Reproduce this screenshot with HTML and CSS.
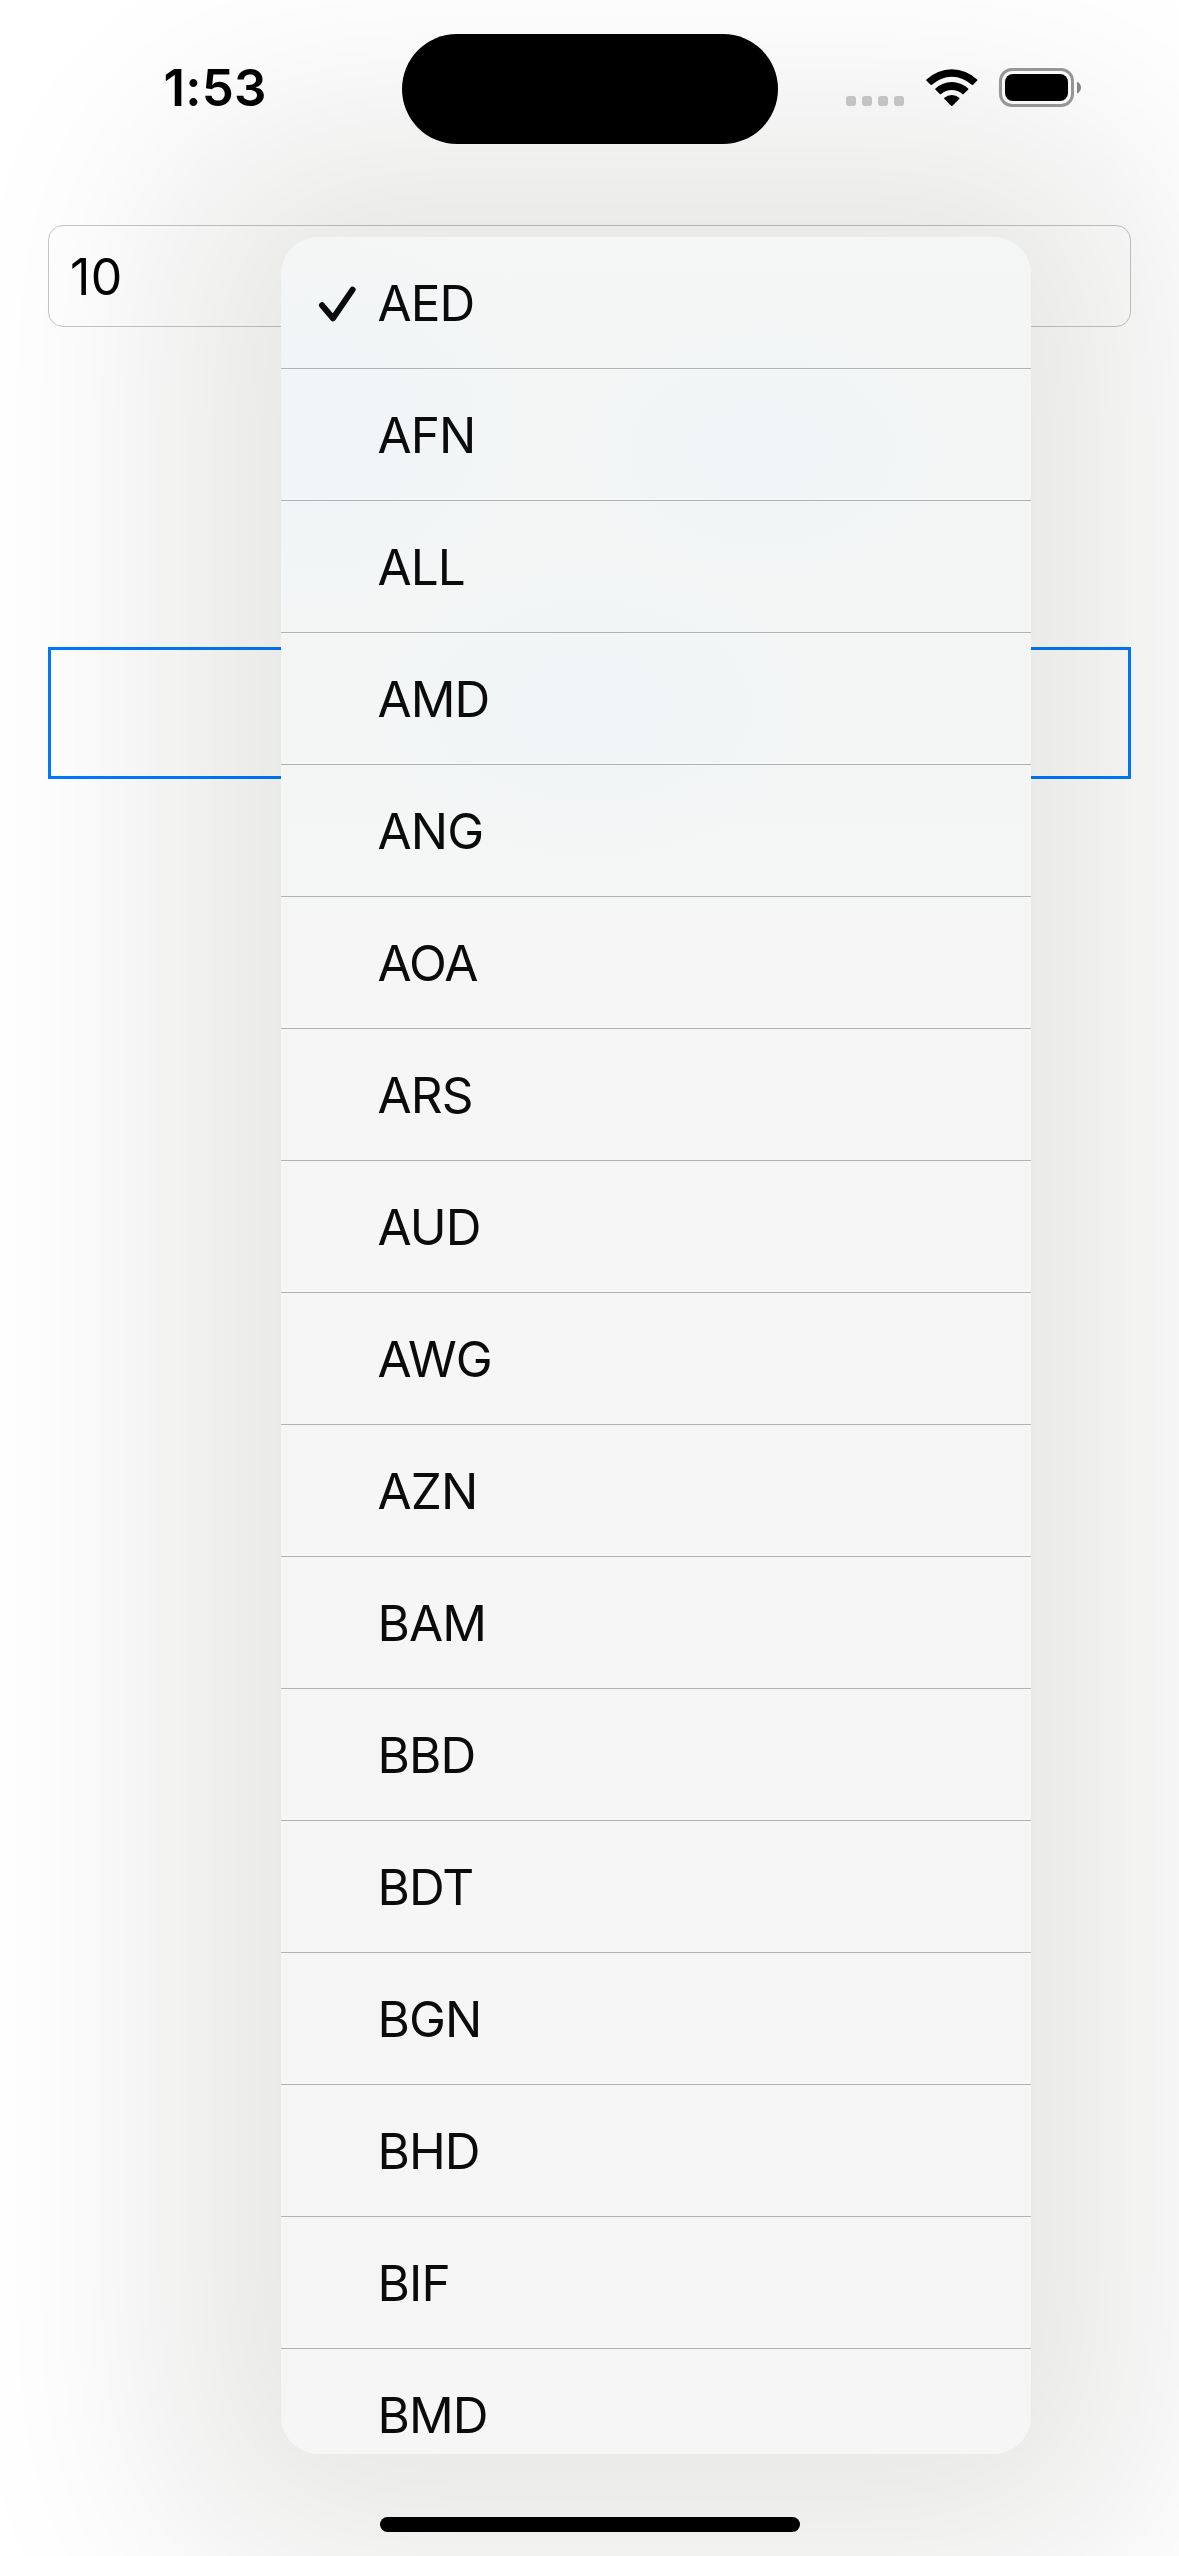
FILE: index.html
```
<!DOCTYPE html>
<html lang="en">
<head>
<meta charset="utf-8">
<title>Currency</title>
<link rel="stylesheet" href="styles.css">
</head>
<body>
<div class="screen">
  <header class="status">
    <div class="time">1:53</div>
    <div class="island"></div>
    <div class="indicators">
      <div class="dots"><i></i><i></i><i></i><i></i></div>
      <svg class="wifi" width="52" height="38" viewBox="0 0 52 38">
        <path d="M0.3 11.6 Q-0.1 11 .5 10.4 A36.6 36.6 0 0 1 51.1 10.4 Q51.7 11 51.3 11.6 L47 15.8 Q46.4 16.3 45.7 15.7 A29.2 29.2 0 0 0 5.9 15.7 Q5.2 16.3 4.6 15.8 Z"/>
        <path d="M9.3 20.6 Q8.9 20 9.5 19.5 A24 24 0 0 1 42.1 19.5 Q42.7 20 42.3 20.6 L37.7 25 Q37.1 25.5 36.5 25 A16.7 16.7 0 0 0 15.1 25 Q14.5 25.5 13.9 25 Z"/>
        <path d="M18.2 29.7 Q17.9 29.2 18.4 28.7 A11.3 11.3 0 0 1 33.2 28.7 Q33.7 29.2 33.4 29.7 L26.5 36.7 Q25.8 37.4 25.1 36.7 Z"/>
      </svg>
      <svg class="battery" width="82" height="39" viewBox="0 0 82 39">
        <rect x="1.5" y="1.5" width="72" height="36" rx="11.5" fill="none" stroke="#969696" stroke-width="3"/>
        <rect x="6" y="6" width="63" height="27" rx="8"/>
        <path d="M78 13.5 Q82 15.5 82 19.5 Q82 23.5 78 25.5 Z" fill="#858585"/>
      </svg>
    </div>
  </header>
  <main class="form">
    <div class="amount">10</div>
    <div class="picker"></div>
  </main>
  <div class="home"></div>
  <ul class="menu">
    <li><svg class="check" width="38" height="38" viewBox="0 0 38 38"><path d="M4 19.2 L15 32.2 L34.6 3.6"/></svg>AED</li>
    <li>AFN</li>
    <li>ALL</li>
    <li>AMD</li>
    <li>ANG</li>
    <li>AOA</li>
    <li>ARS</li>
    <li>AUD</li>
    <li>AWG</li>
    <li>AZN</li>
    <li>BAM</li>
    <li>BBD</li>
    <li>BDT</li>
    <li>BGN</li>
    <li>BHD</li>
    <li>BIF</li>
    <li>BMD</li>
  </ul>
</div>
</body>
</html>
```
FILE: styles.css
```
* {
  box-sizing: border-box;
}

body {
  margin: 0;
  background: #fff;
  font-family: Inter, "Liberation Sans", sans-serif;
  color: #000;
}

.screen {
  position: relative;
  display: flex;
  flex-direction: column;
  width: 1179px;
  height: 2556px;
  overflow: hidden;
}

.status {
  position: relative;
  z-index: 2;
  display: grid;
  grid-template-columns: 401.5px 376px 1fr;
  height: 225px;
  padding-top: 33px;
  align-items: start;
}

.time {
  padding: 24px 0 0 163.5px;
  font-size: 51px;
  line-height: 62px;
  font-weight: 600;
  letter-spacing: 0.2px;
}

.island {
  height: 110px;
  margin-top: 1px;
  border-radius: 56px;
  background: #000;
}

.indicators {
  display: flex;
  align-items: flex-start;
  padding: 35px 0 0 68.5px;
}

.dots {
  display: flex;
  gap: 6px;
  margin-top: 28px;
}

.dots i {
  width: 10px;
  height: 10px;
  border-radius: 3px;
  background: #c4c4c4;
}

.wifi {
  margin: 1px 0 0 21.5px;
}

.battery {
  margin-left: 21.5px;
}

.form {
  flex: 1;
  padding: 0 48px;
}

.amount {
  height: 102px;
  padding: 20px 0 0 21px;
  border: 1px solid #c6c6c6;
  border-radius: 15px;
  font-size: 50px;
  line-height: 62px;
  letter-spacing: 0.4px;
}

.picker {
  height: 132px;
  margin-top: 320px;
  border: 3px solid #007aff;
}

.home {
  position: relative;
  z-index: 2;
  align-self: center;
  width: 420px;
  height: 15px;
  margin-bottom: 24px;
  border-radius: 8px;
  background: #000;
}

.menu {
  position: absolute;
  left: 281px;
  top: 237px;
  width: 750px;
  height: 2217px;
  margin: 0;
  padding: 0;
  overflow: hidden;
  list-style: none;
  border-radius: 38px;
  background:
    radial-gradient(ellipse 200px 140px at 480px 215px, rgba(239, 244, 247, 0.7), rgba(239, 244, 247, 0)),
    radial-gradient(ellipse 220px 200px at 40px 190px, rgba(239, 244, 247, 0.8), rgba(239, 244, 247, 0)),
    radial-gradient(ellipse 240px 160px at 310px 470px, rgba(239, 244, 247, 0.7), rgba(239, 244, 247, 0)),
    linear-gradient(#f5f6f6, #f4f6f6 120px, #f4f6f6 520px, #f6f6f6 720px);
  box-shadow: 0 0 220px 112px rgba(16, 16, 6, 0.102);
}

.menu li {
  position: relative;
  height: 132px;
  padding-left: 96.5px;
  border-bottom: 1px solid #b2b4b4;
  font-size: 49.5px;
  line-height: 132px;
  letter-spacing: -0.9px;
  color: #0b0b0b;
}

.check {
  position: absolute;
  left: 36.5px;
  top: 48.5px;
  fill: none;
  stroke: #0b0b0b;
  stroke-width: 6;
  stroke-linecap: round;
  stroke-linejoin: round;
}
```
